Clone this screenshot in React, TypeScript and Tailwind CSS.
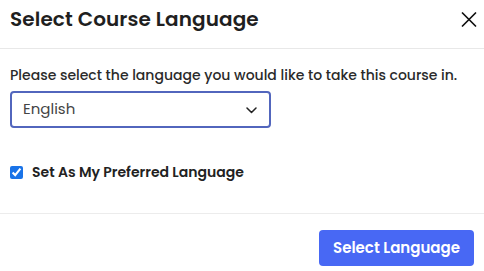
import {useState} from 'react'

const font = {fontFamily: '"Poppins", "Inter", "Noto Sans", sans-serif'}

export default function App() {
    const [lang, setLang] = useState('English')
    const [preferred, setPreferred] = useState(true)

    return (
        <div className="w-[484px] h-[271px] bg-white text-[#222] overflow-hidden" style={font}>
            <div className="flex items-start justify-between h-[49px] pl-[10px] pr-[7px] pt-[5px] border-b border-[#e8e8e8]">
                <h2 className="text-[20px] leading-[28px] font-semibold tracking-[0.1px] text-[#1f1f1f]">Select Course Language</h2>
                <button className="w-[17px] h-[17px] mt-[6px] flex items-center justify-center text-[#111]">
                    <svg width="16" height="15" viewBox="0 0 16 15" fill="none" stroke="currentColor" strokeWidth="1.7" strokeLinecap="round">
                        <path d="M1.5 1 L14.5 14 M14.5 1 L1.5 14"/>
                    </svg>
                </button>
            </div>

            <div className="px-[10px] pt-[16px] h-[165px] border-b border-[#ececec]">
                <p className="text-[14px] font-medium text-[#2a2a2a] leading-[20px]">
                    Please select the language you would like to take this course in.
                </p>
                <div className="relative mt-[6px] w-[261px]">
                    <select
                        value={lang}
                        onChange={(e) => setLang(e.target.value)}
                        className="appearance-none w-full h-[37px] rounded-[4px] border-2 border-[#5266bd] bg-white pl-[11px] pr-8 text-[15px] text-[#444] outline-none"
                        style={font}
                    >
                        <option>English</option>
                        <option>Spanish</option>
                        <option>French</option>
                    </select>
                    <svg className="absolute right-[14px] top-[16px] pointer-events-none" width="11" height="7" viewBox="0 0 11 7" fill="none" stroke="#222" strokeWidth="1.5" strokeLinecap="round" strokeLinejoin="round">
                        <path d="M1 1 L5.5 5.5 L10 1"/>
                    </svg>
                </div>
                <label className="flex items-center gap-[9px] mt-[34px]">
                    <input
                        type="checkbox"
                        checked={preferred}
                        onChange={(e) => setPreferred(e.target.checked)}
                        className="w-[13px] h-[13px] m-0 accent-[#1a73e8]"
                    />
                    <span className="text-[14px] font-semibold text-[#222]">Set As My Preferred Language</span>
                </label>
            </div>

            <div className="flex justify-end pr-[10px] pt-[16px]">
                <button className="h-[36px] w-[155px] rounded-[4px] bg-[#4868f4] text-white text-[15px] font-semibold" style={font}>
                    Select Language
                </button>
            </div>
        </div>
    )
}
